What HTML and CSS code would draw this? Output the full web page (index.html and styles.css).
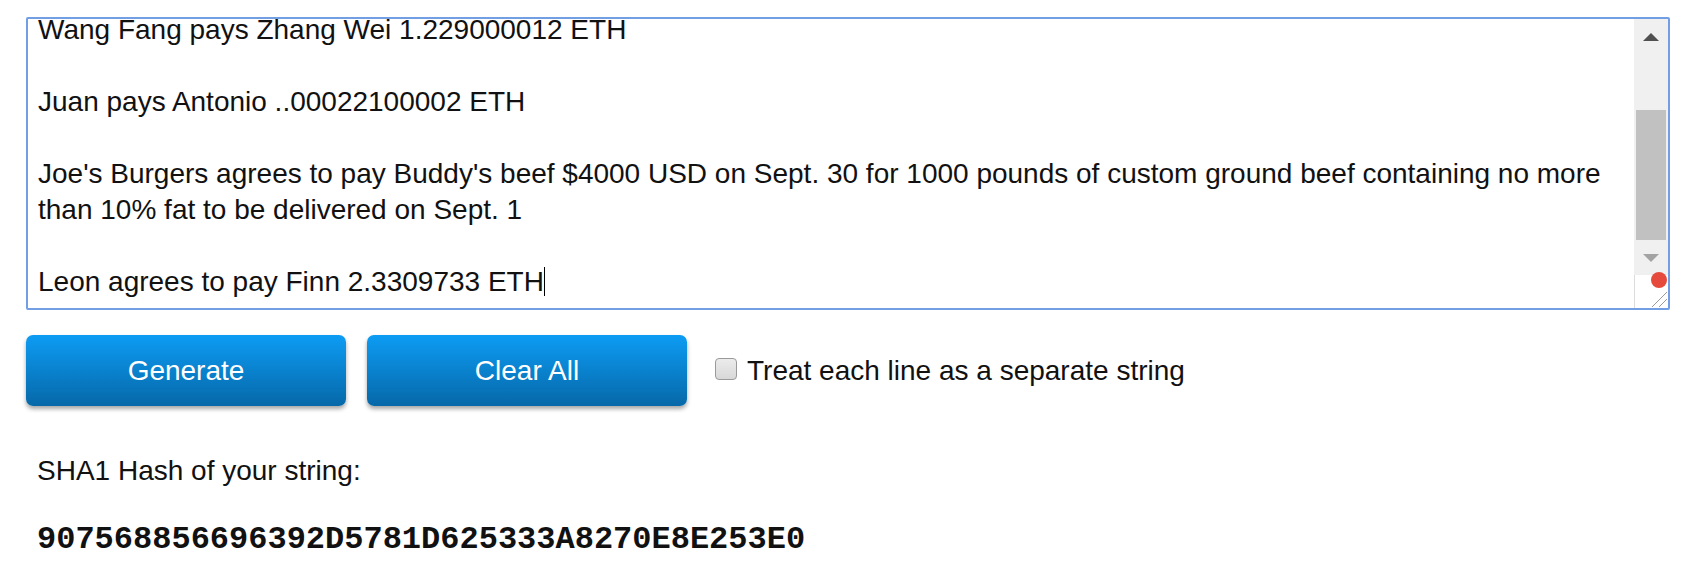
FILE: index.html
```html
<!DOCTYPE html>
<html>
<head>
<meta charset="utf-8">
<link rel="stylesheet" href="styles.css">
</head>
<body>
<div class="page">
  <div class="textarea">
    <div class="text-view">
      <div class="text">Wang Fang pays Zhang Wei 1.229000012 ETH

Juan pays Antonio ..00022100002 ETH

Joe's Burgers agrees to pay Buddy's beef $4000 USD on Sept. 30 for 1000 pounds of custom ground beef containing no more than 10% fat to be delivered on Sept. 1

Leon agrees to pay Finn 2.3309733 ETH<span class="caret"></span></div>
    </div>
    <div class="scrollbar">
      <div class="sb-btn"><span class="arrow-up"></span></div>
      <div class="sb-track"><div class="sb-thumb" style="margin-top:55px;height:130px"></div></div>
      <div class="sb-btn sb-btn-down"><span class="arrow-down"></span></div>
      <div class="sb-corner">
        <span class="dot"></span>
        <svg class="grip" width="18" height="18" viewBox="0 0 18 18">
          <line x1="2" y1="17" x2="17" y2="2" stroke="#9a9a9a" stroke-width="1"/>
          <line x1="9" y1="17" x2="17" y2="9" stroke="#9a9a9a" stroke-width="1"/>
        </svg>
      </div>
    </div>
  </div>

  <div class="controls">
    <button class="btn">Generate</button>
    <button class="btn">Clear All</button>
    <label class="check"><span class="box"></span>Treat each line as a separate string</label>
  </div>

  <div class="result-label">SHA1 Hash of your string:</div>
  <div class="hash">907568856696392D5781D625333A8270E8E253E0</div>
</div>
</body>
</html>
```

FILE: styles.css
```css
html, body {
  margin: 0;
  padding: 0;
  background: #ffffff;
}

.page {
  padding: 17px 28px 0 26px;
  display: flex;
  flex-direction: column;
  font-family: "Liberation Sans", Arial, sans-serif;
  color: #111;
}

.textarea {
  position: relative;
  display: flex;
  height: 293px;
  box-sizing: border-box;
  border: 2px solid #729fe4;
  border-radius: 2px;
  background: #fff;
}

.text-view {
  flex: 1;
  overflow: hidden;
}

.text {
  margin-top: -7px;
  padding: 0 20px 0 10px;
  font-size: 28px;
  line-height: 36px;
  white-space: pre-wrap;
  color: #111;
}

.caret {
  display: inline-block;
  width: 1px;
  height: 29px;
  background: #000;
  vertical-align: -5px;
}

.scrollbar {
  width: 34px;
  display: flex;
  flex-direction: column;
  background: #f0f0f0;
}

.sb-btn {
  height: 36px;
  display: flex;
  align-items: center;
  justify-content: center;
}

.sb-btn-down {
  height: 35px;
}

.arrow-up {
  width: 0;
  height: 0;
  border-left: 8px solid transparent;
  border-right: 8px solid transparent;
  border-bottom: 8px solid #505050;
}

.arrow-down {
  width: 0;
  height: 0;
  border-left: 8px solid transparent;
  border-right: 8px solid transparent;
  border-top: 8px solid #a3a3a3;
}

.sb-track {
  flex: 1;
  display: flex;
  flex-direction: column;
  padding: 0 2px;
}

.sb-thumb {
  background: #c1c1c1;
}

.sb-corner {
  position: relative;
  height: 33px;
  background: #fff;
  border-left: 1px solid #dcdcdc;
}

.dot {
  position: absolute;
  left: 16px;
  top: -3px;
  width: 16px;
  height: 16px;
  border-radius: 50%;
  background: #e64a3c;
}

.grip {
  position: absolute;
  right: 0;
  bottom: 0;
}

.controls {
  margin-top: 25px;
  display: flex;
  align-items: center;
  gap: 21px;
}

.btn {
  width: 320px;
  height: 71px;
  border: none;
  border-radius: 7px;
  background: linear-gradient(#0d9cf4, #0668a8);
  color: #fff;
  font-family: "Liberation Sans", Arial, sans-serif;
  font-size: 28px;
  box-shadow: 0 3px 4px rgba(0, 0, 0, 0.35);
  cursor: pointer;
}

.check {
  margin-left: 7px;
  display: flex;
  align-items: center;
  gap: 10px;
  font-size: 28px;
  color: #111;
}

.box {
  width: 20px;
  height: 20px;
  border: 1px solid #9a9a9a;
  border-radius: 4px;
  background: linear-gradient(#ececec, #d8d8d8);
  margin-top: -4px;
}

.result-label {
  margin-top: 47px;
  padding-left: 11px;
  font-size: 28px;
  line-height: 36px;
}

.hash {
  margin-top: 31px;
  padding-left: 11px;
  font-family: "Liberation Mono", "Courier New", monospace;
  font-weight: bold;
  font-size: 32px;
  line-height: 40px;
  color: #111;
}
```
